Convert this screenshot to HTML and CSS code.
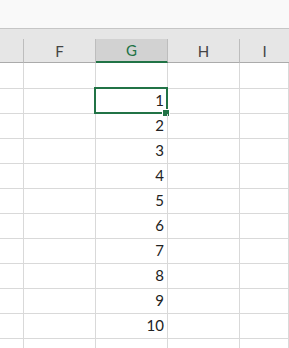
FILE: index.html
```
<!DOCTYPE html>
<html>
<head>
<meta charset="utf-8">
<link rel="stylesheet" href="styles.css">
</head>
<body>
<div class="sheet">
  <div class="topband"></div>
  <div class="headstrip"></div>
  <div class="row header">
    <div class="hcell"></div>
    <div class="hcell">F</div>
    <div class="hcell sel">G</div>
    <div class="hcell">H</div>
    <div class="hcell last">I</div>
  </div>
  <div class="body">
    <div class="row first"><div class="cell"></div><div class="cell"></div><div class="cell num"></div><div class="cell"></div><div class="cell"></div></div>
    <div class="row"><div class="cell"></div><div class="cell"></div><div class="cell num active">1<span class="handle"></span></div><div class="cell"></div><div class="cell"></div></div>
    <div class="row"><div class="cell"></div><div class="cell"></div><div class="cell num">2</div><div class="cell"></div><div class="cell"></div></div>
    <div class="row"><div class="cell"></div><div class="cell"></div><div class="cell num">3</div><div class="cell"></div><div class="cell"></div></div>
    <div class="row"><div class="cell"></div><div class="cell"></div><div class="cell num">4</div><div class="cell"></div><div class="cell"></div></div>
    <div class="row"><div class="cell"></div><div class="cell"></div><div class="cell num">5</div><div class="cell"></div><div class="cell"></div></div>
    <div class="row"><div class="cell"></div><div class="cell"></div><div class="cell num">6</div><div class="cell"></div><div class="cell"></div></div>
    <div class="row"><div class="cell"></div><div class="cell"></div><div class="cell num">7</div><div class="cell"></div><div class="cell"></div></div>
    <div class="row"><div class="cell"></div><div class="cell"></div><div class="cell num">8</div><div class="cell"></div><div class="cell"></div></div>
    <div class="row"><div class="cell"></div><div class="cell"></div><div class="cell num">9</div><div class="cell"></div><div class="cell"></div></div>
    <div class="row"><div class="cell"></div><div class="cell"></div><div class="cell num">10</div><div class="cell"></div><div class="cell"></div></div>
    <div class="row"><div class="cell"></div><div class="cell"></div><div class="cell num"></div><div class="cell"></div><div class="cell"></div></div>
  </div>
</div>
</body>
</html>
```
FILE: styles.css
```
html, body {
  margin: 0;
  padding: 0;
  background: #ffffff;
  overflow: hidden;
}
.sheet {
  width: 289px;
  height: 348px;
  overflow: hidden;
  font-family: Lato, "Liberation Sans", sans-serif;
}
.topband {
  height: 28px;
  background: #f9f9f9;
  border-bottom: 1px solid #c6c6c6;
}
.headstrip {
  height: 10px;
  background: #e6e6e6;
}
.row {
  display: grid;
  grid-template-columns: 24px 72px 72px 72px 49px;
}
.header .hcell {
  box-sizing: border-box;
  height: 24px;
  background: #e6e6e6;
  border-right: 1px solid #bdbdbd;
  border-bottom: 1px solid #ababab;
  color: #444444;
  font-size: 15px;
  display: flex;
  align-items: center;
  justify-content: center;
}
.header .hcell.sel {
  background: #d2d2d2;
  color: #217346;
  border-bottom: 2px solid #217346;
}
.header .hcell.last {
  border-right: none;
}
.body .row {
  height: 25px;
}
.body .row.first {
  height: 26px;
}
.cell {
  box-sizing: border-box;
  border-right: 1px solid #d9d9d9;
  border-bottom: 1px solid #d9d9d9;
}
.cell.num {
  position: relative;
  font-size: 15px;
  color: #222222;
  text-align: right;
  padding-right: 3px;
  line-height: 23px;
}
.cell.active::before {
  content: "";
  position: absolute;
  left: -2px;
  top: -2px;
  right: -1px;
  bottom: -1px;
  border: 2px solid #217346;
  pointer-events: none;
}
.handle {
  position: absolute;
  right: -3px;
  bottom: -4px;
  width: 6px;
  height: 6px;
  background: #217346;
  border: 1px solid #ffffff;
}
```
